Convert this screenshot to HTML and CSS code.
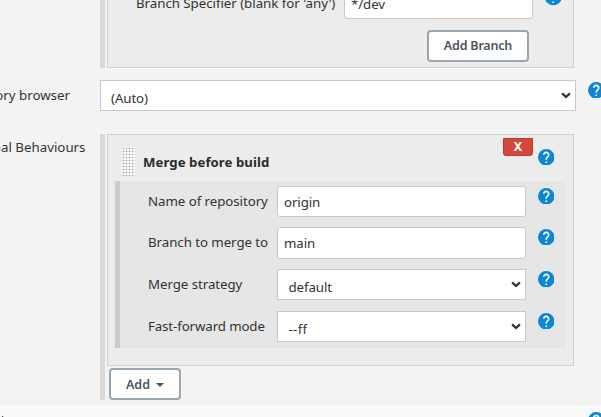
FILE: index.html
```
<!DOCTYPE html>
<html lang="en">
<head>
<meta charset="utf-8">
<title>Source Code Management</title>
<link rel="stylesheet" href="styles.css">
</head>
<body>
<svg class="defs" aria-hidden="true">
  <symbol id="help" viewBox="2 2 20 20"><circle cx="12" cy="12" r="10" fill="#0b87d6"/><path fill="#fff" d="M13 19h-2v-2h2v2zm2.070-7.750l-.9.920C13.450 12.900 13 13.500 13 15h-2v-.5c0-1.100.45-2.100 1.170-2.830l1.240-1.260c.37-.36.59-.86.59-1.410 0-1.100-.9-2-2-2s-2 .9-2 2H8c0-2.210 1.790-4 4-4s4 1.790 4 4c0 .88-.36 1.680-.93 2.250z"/></symbol>
  <symbol id="chevron" viewBox="0 0 10 7"><path d="M1.100 1.300L5 5 8.900 1.300" fill="none" stroke="#333" stroke-width="2.300"/></symbol>
</svg>
<main class="page">
  <section class="row branches">
    <div class="rail"></div>
    <div class="panel">
      <div class="branch-row">
        <span class="label l-spec"><span>Branch Specifier (blank for 'any')</span></span>
        <div class="field"><span>*/dev</span></div>
        <svg class="help"><use href="#help"/></svg>
      </div>
      <button class="btn add-branch"><span>Add Branch</span></button>
    </div>
  </section>
  <section class="row browser">
    <div class="side"><span>Repository browser</span></div>
    <div class="field select"><span>(Auto)</span><svg class="chev"><use href="#chevron"/></svg></div>
    <svg class="help"><use href="#help"/></svg>
  </section>
  <section class="row behaviours">
    <div class="side"><span>Additional Behaviours</span></div>
    <div class="rail"></div>
    <div class="content">
      <div class="panel">
        <header class="head">
          <i class="grip"></i>
          <b class="title">Merge before build</b>
          <button class="delete">X</button>
          <svg class="help"><use href="#help"/></svg>
        </header>
        <div class="options">
          <div class="option"><span class="label">Name of repository</span><div class="field"><span>origin</span></div><svg class="help"><use href="#help"/></svg></div>
          <div class="option"><span class="label">Branch to merge to</span><div class="field tall"><span>main</span></div><svg class="help"><use href="#help"/></svg></div>
          <div class="option"><span class="label">Merge strategy</span><div class="field select"><span>default</span><svg class="chev"><use href="#chevron"/></svg></div><svg class="help"><use href="#help"/></svg></div>
          <div class="option"><span class="label l-ff">Fast-forward mode</span><div class="field select"><span class="flag">--ff</span><svg class="chev"><use href="#chevron"/></svg></div><svg class="help"><use href="#help"/></svg></div>
        </div>
      </div>
      <button class="btn add"><span>Add</span><i class="caret"></i></button>
    </div>
  </section>
  <section class="next"><span class="next-label">l</span><svg class="help"><use href="#help"/></svg></section>
</main>
</body>
</html>
```
FILE: styles.css
```
* { box-sizing: border-box; }
body { margin: 0; background: #f3f3f3; color: #333; font: 13.3px/20px "Noto Sans", "Open Sans", sans-serif; }
button { font: inherit; padding: 0; }
.defs { display: none; }
.page { width: 601px; height: 417px; overflow: hidden; display: flex; flex-direction: column; }
.row { display: flex; flex: none; align-items: flex-start; }
.side { width: 100px; flex: none; display: flex; white-space: nowrap; justify-content: flex-end; }
.rail { width: 5px; align-self: stretch; background: #d8d8d8; margin-right: 2px; flex: none; }
.panel { width: 467px; background: #ececec; border: 1px solid #d0d0d0; }
.help { width: 16.5px; height: 16.5px; flex: none; display: block; }
.label { white-space: nowrap; flex: none; letter-spacing: -0.06px; }
.field { height: 31px; background: #fff; border: 1px solid #c9c9c9; border-radius: 3px; padding: 5px 0 0 6px; line-height: 20px; flex: none; display: flex; letter-spacing: -0.1px; }
.select { border-radius: 0; padding: 7px 4px 0 10.5px; justify-content: space-between; }
.chev { width: 10px; height: 7px; margin-top: 4px; }
.btn { background: #fff; border: 2px solid #98a6b1; border-radius: 4px; height: 32px; color: #4d545d; font-weight: 600; font-size: 12.5px; display: flex; align-items: center; justify-content: center; padding-top: 1px; }

.branches { height: 68px; padding-left: 100px; }
.branches .panel { height: 68px; border-top: 0; }
.branch-row { display: flex; height: 31px; margin-top: -12px; padding-left: 28px; }
.l-spec { width: 208px; padding-top: 5px; letter-spacing: -0.04px; }
.branch-row .field { width: 189px; }
.branch-row .help { margin: 1px 0 0 11.5px; }
.add-branch { width: 102px; margin: 11px 0 0 319px; padding: 0 0 1px; letter-spacing: -0.2px; }

.browser { margin-top: 12px; }
.browser .side { padding: 5px 30px 0 0; }
.browser .select { width: 476px; padding-left: 10px; }
.browser .chev { margin-top: 4px; }
.browser .help { margin: 1.5px 0 0 11.5px; }

.behaviours { margin-top: 23px; height: 266px; }
.behaviours .side { padding: 3px 14.5px 0 0; }
.behaviours .panel { height: 232px; }
.head { display: flex; align-items: flex-start; height: 46px; padding-left: 14px; }
.grip { width: 13px; height: 29px; margin-top: 12px; background: radial-gradient(circle at 1.5px 1.5px, #aaa 0.7px, #fff 1.2px) 0 0 / 3px 3px; }
.title { width: 360px; margin: 17px 0 0 8px; font-size: 13.2px; letter-spacing: 0.06px; color: #2b2b2b; white-space: nowrap; }
.delete { width: 30px; height: 18px; margin-top: 3px; background: #d2483a; border: 1px solid #bd3b2e; border-radius: 0 0 3px 3px; color: #fff; font-size: 12.5px; font-weight: 700; line-height: 16px; }
.head .help { margin: 13.5px 0 0 4.5px; }
.options { width: 451px; height: 167px; margin-left: 7px; border-left: 5px solid #ccc; background: #e6e6e6; padding: 5px 0 0 28px; }
.option { display: flex; height: 42px; }
.option:first-child { height: 41px; }
.option .label { width: 129px; padding-top: 5px; }
.option .l-ff { letter-spacing: -0.12px; }
.flag { letter-spacing: 0.3px; }
.option .field { width: 249px; }
.option .tall { height: 32px; }
.option .help { margin: 1.5px 0 0 11.5px; }
.add { width: 72px; margin: 2px 0 0 2px; }
.caret { border: 4px solid transparent; border-top-color: #4d545d; border-bottom: 0; margin-left: 6px; }

.next { flex: none; margin-top: 5px; height: 12px; background: #f9f9f9; display: flex; justify-content: space-between; overflow: hidden; }
.next-label { margin: 7px 0 0 1px; font-size: 12px; }
.next .help { margin: 6.5px -3px 0 0; }
```
